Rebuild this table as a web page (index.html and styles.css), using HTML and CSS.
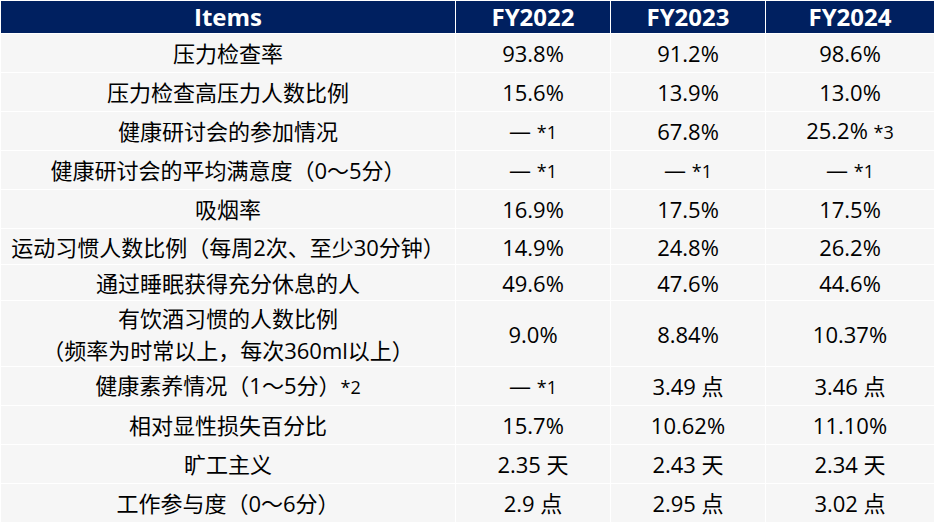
FILE: index.html
```html
<!DOCTYPE html>
<html lang="zh-CN">
<head>
<meta charset="utf-8">
<link rel="stylesheet" href="styles.css">
</head>
<body>
<table class="data">
  <colgroup>
    <col class="c-item"><col class="c-year"><col class="c-year"><col class="c-last">
  </colgroup>
  <thead>
    <tr class="head"><th>Items</th><th>FY2022</th><th>FY2023</th><th>FY2024</th></tr>
  </thead>
  <tbody>
    <tr class="r38"><td>压力检查率</td><td>93.8%</td><td>91.2%</td><td>98.6%</td></tr>
    <tr class="r38"><td>压力检查高压力人数比例</td><td>15.6%</td><td>13.9%</td><td>13.0%</td></tr>
    <tr class="r38"><td>健康研讨会的参加情况</td><td>— <span class="note">*1</span></td><td>67.8%</td><td>25.2% <span class="note">*3</span></td></tr>
    <tr class="r38"><td>健康研讨会的平均满意度（0～5分）</td><td>— <span class="note">*1</span></td><td>— <span class="note">*1</span></td><td>— <span class="note">*1</span></td></tr>
    <tr class="r38"><td>吸烟率</td><td>16.9%</td><td>17.5%</td><td>17.5%</td></tr>
    <tr class="r35"><td>运动习惯人数比例（每周2次、至少30分钟）</td><td>14.9%</td><td>24.8%</td><td>26.2%</td></tr>
    <tr class="r35"><td>通过睡眠获得充分休息的人</td><td>49.6%</td><td>47.6%</td><td>44.6%</td></tr>
    <tr class="r65"><td class="two">有饮酒习惯的人数比例<br>（频率为时常以上，每次360ml以上）</td><td>9.0%</td><td>8.84%</td><td>10.37%</td></tr>
    <tr class="r38"><td>健康素养情况（1～5分）<span class="note">*2</span></td><td>— <span class="note">*1</span></td><td>3.49 点</td><td>3.46 点</td></tr>
    <tr class="r38"><td>相对显性损失百分比</td><td>15.7%</td><td>10.62%</td><td>11.10%</td></tr>
    <tr class="r38"><td>旷工主义</td><td>2.35 天</td><td>2.43 天</td><td>2.34 天</td></tr>
    <tr class="r38"><td>工作参与度（0～6分）</td><td>2.9 点</td><td>2.95 点</td><td>3.02 点</td></tr>
  </tbody>
</table>
</body>
</html>
```
FILE: styles.css
```css
html, body {
  margin: 0;
  padding: 0;
  background: #ffffff;
}

.data {
  border-collapse: separate;
  border-spacing: 1px;
  table-layout: fixed;
  width: 935px;
  font-family: "Open Sans", "Noto Sans CJK SC", sans-serif;
  color: #000000;
}

.c-item { width: 454px; }
.c-year { width: 154px; }
.c-last { width: 168px; }

.data th,
.data td {
  padding: 0;
  text-align: center;
  vertical-align: middle;
  white-space: nowrap;
}

.head th {
  height: 32px;
  background: #002060;
  color: #ffffff;
  font-weight: 700;
  font-size: 24px;
  line-height: 32px;
}

.data td {
  background: #f6f6f6;
  font-size: 22px;
  line-height: 30px;
}

.r38 td { height: 38px; }
.r35 td { height: 35px; }
.r65 td { height: 65px; }

.data td.two {
  line-height: 32px;
}

.note {
  font-size: 18px;
}
```
